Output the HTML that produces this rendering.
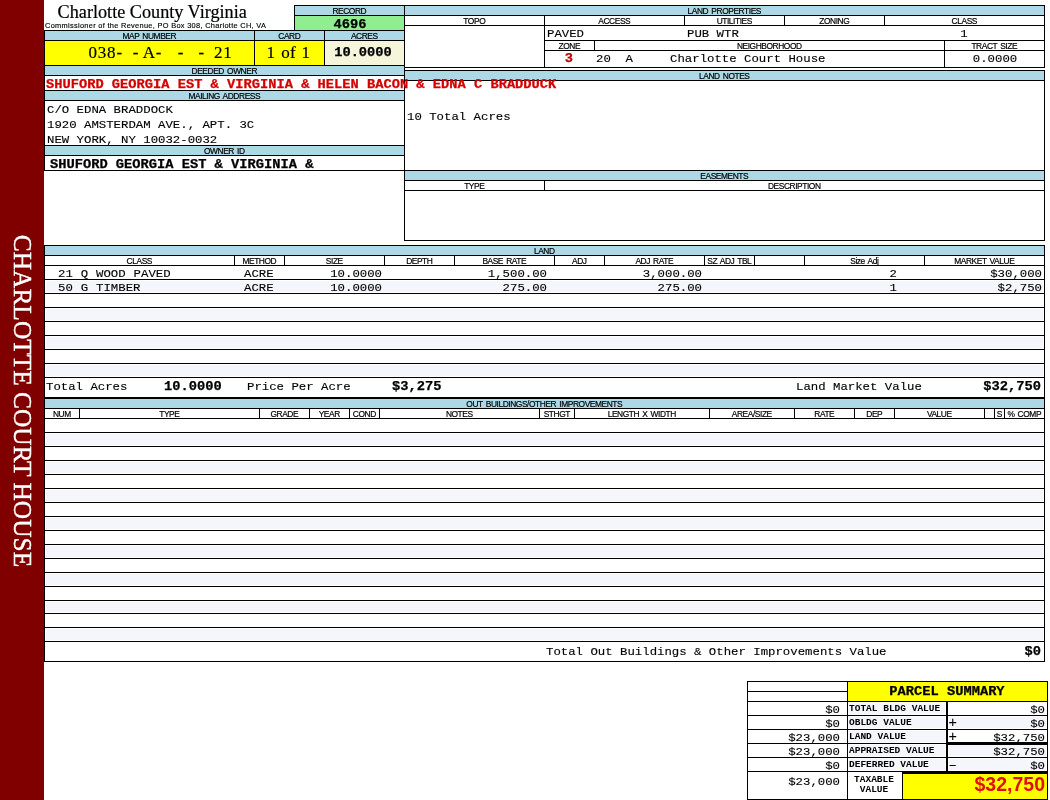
<!DOCTYPE html>
<html lang="en"><head><meta charset="utf-8"><title>Charlotte County Virginia - Property Card</title>
<style>
html,body{margin:0;padding:0;background:#fff}
#pg{position:relative;width:1050px;height:800px;overflow:hidden;background:#fff}
.f,.l,.t{position:absolute}
.l{background:#000}
#tx{position:absolute;left:0;top:0;width:1050px;height:800px;will-change:transform}
.t{white-space:nowrap;color:#000}
.lab,.sub{font-family:"Liberation Sans",Arial,sans-serif}
.lab{word-spacing:1.2px;-webkit-text-stroke:0.2px #000}
.sub{-webkit-text-stroke:0.15px #000}
.serif{font-family:"Liberation Serif","Times New Roman",serif;-webkit-text-stroke:0.2px #000}
.mono,.monob,.pl{font-family:"Liberation Mono","Courier New",monospace}
.monob,.pl{font-weight:bold}
.monob{-webkit-text-stroke:0.25px currentColor}
.mono{-webkit-text-stroke:0.12px #000}
.red{color:#d40000}.red2{color:#c00000}
.big{font-family:"Liberation Sans",Arial,sans-serif;font-weight:bold;color:#e01010}
#sidet{position:absolute;left:23px;top:401px;width:0;height:0}
#sidet span{position:absolute;left:-300px;top:-15px;width:600px;height:30px;line-height:30px;text-align:center;transform:rotate(90deg);color:#fff;font-family:"Liberation Serif","Times New Roman",serif;font-size:25.4px;white-space:nowrap;-webkit-text-stroke:0.35px #fff}
</style></head><body>
<div id="pg">
<div class="f" style="left:0px;top:0px;width:44px;height:800px;background:#800000"></div>
<div class="f" style="left:295px;top:6px;width:109px;height:9px;background:#add8e6"></div>
<div class="f" style="left:295px;top:16px;width:109px;height:14px;background:#90ee90"></div>
<div class="f" style="left:45px;top:31px;width:359px;height:9px;background:#add8e6"></div>
<div class="f" style="left:45px;top:41px;width:279px;height:24px;background:#ffff00"></div>
<div class="f" style="left:325px;top:41px;width:79px;height:24px;background:#f5f5dc"></div>
<div class="f" style="left:45px;top:66px;width:359px;height:9px;background:#add8e6"></div>
<div class="f" style="left:45px;top:91px;width:359px;height:9px;background:#add8e6"></div>
<div class="f" style="left:45px;top:146px;width:359px;height:9px;background:#add8e6"></div>
<div class="f" style="left:405px;top:6px;width:639px;height:9px;background:#add8e6"></div>
<div class="f" style="left:405px;top:71px;width:639px;height:9px;background:#add8e6"></div>
<div class="f" style="left:405px;top:171px;width:639px;height:9px;background:#add8e6"></div>
<div class="f" style="left:45px;top:246px;width:999px;height:9px;background:#add8e6"></div>
<div class="f" style="left:46px;top:281px;width:997px;height:11px;background:#f5f6fb"></div>
<div class="f" style="left:46px;top:309px;width:997px;height:11px;background:#f5f6fb"></div>
<div class="f" style="left:46px;top:337px;width:997px;height:11px;background:#f5f6fb"></div>
<div class="f" style="left:46px;top:365px;width:997px;height:11px;background:#f5f6fb"></div>
<div class="f" style="left:45px;top:399px;width:999px;height:9px;background:#add8e6"></div>
<div class="f" style="left:46px;top:434px;width:997px;height:11px;background:#f5f6fb"></div>
<div class="f" style="left:46px;top:462px;width:997px;height:11px;background:#f5f6fb"></div>
<div class="f" style="left:46px;top:490px;width:997px;height:11px;background:#f5f6fb"></div>
<div class="f" style="left:46px;top:518px;width:997px;height:11px;background:#f5f6fb"></div>
<div class="f" style="left:46px;top:546px;width:997px;height:11px;background:#f5f6fb"></div>
<div class="f" style="left:46px;top:574px;width:997px;height:11px;background:#f5f6fb"></div>
<div class="f" style="left:46px;top:602px;width:997px;height:10px;background:#f5f6fb"></div>
<div class="f" style="left:46px;top:629px;width:997px;height:11px;background:#f5f6fb"></div>
<div class="f" style="left:848px;top:682px;width:199px;height:19px;background:#ffff00"></div>
<div class="f" style="left:849px;top:703px;width:96px;height:11px;background:#f5f6fb"></div>
<div class="f" style="left:849px;top:717px;width:96px;height:11px;background:#f5f6fb"></div>
<div class="f" style="left:849px;top:731px;width:96px;height:11px;background:#f5f6fb"></div>
<div class="f" style="left:849px;top:745px;width:96px;height:11px;background:#f5f6fb"></div>
<div class="f" style="left:849px;top:759px;width:96px;height:11px;background:#f5f6fb"></div>
<div class="f" style="left:949px;top:717px;width:97px;height:11px;background:#f5f6fb"></div>
<div class="f" style="left:949px;top:745px;width:97px;height:11px;background:#f5f6fb"></div>
<div class="f" style="left:949px;top:759px;width:97px;height:11px;background:#f5f6fb"></div>
<div class="f" style="left:903px;top:774px;width:144px;height:25px;background:#ffff00"></div>
<div class="l" style="left:294px;top:5px;width:111px;height:1px"></div>
<div class="l" style="left:294px;top:5px;width:1px;height:26px"></div>
<div class="l" style="left:294px;top:15px;width:111px;height:1px"></div>
<div class="l" style="left:44px;top:30px;width:361px;height:1px"></div>
<div class="l" style="left:44px;top:40px;width:361px;height:1px"></div>
<div class="l" style="left:254px;top:30px;width:1px;height:36px"></div>
<div class="l" style="left:324px;top:30px;width:1px;height:36px"></div>
<div class="l" style="left:44px;top:65px;width:361px;height:1px"></div>
<div class="l" style="left:44px;top:75px;width:361px;height:1px"></div>
<div class="l" style="left:44px;top:90px;width:361px;height:1px"></div>
<div class="l" style="left:44px;top:100px;width:361px;height:1px"></div>
<div class="l" style="left:44px;top:145px;width:361px;height:1px"></div>
<div class="l" style="left:44px;top:155px;width:361px;height:1px"></div>
<div class="l" style="left:44px;top:170px;width:361px;height:1px"></div>
<div class="l" style="left:44px;top:30px;width:1px;height:141px"></div>
<div class="l" style="left:404px;top:5px;width:1px;height:236px"></div>
<div class="l" style="left:404px;top:5px;width:641px;height:1px"></div>
<div class="l" style="left:404px;top:15px;width:641px;height:1px"></div>
<div class="l" style="left:404px;top:25px;width:641px;height:1px"></div>
<div class="l" style="left:684px;top:15px;width:1px;height:11px"></div>
<div class="l" style="left:784px;top:15px;width:1px;height:11px"></div>
<div class="l" style="left:884px;top:15px;width:1px;height:11px"></div>
<div class="l" style="left:544px;top:15px;width:1px;height:53px"></div>
<div class="l" style="left:544px;top:40px;width:501px;height:1px"></div>
<div class="l" style="left:544px;top:50px;width:501px;height:1px"></div>
<div class="l" style="left:594px;top:40px;width:1px;height:11px"></div>
<div class="l" style="left:944px;top:40px;width:1px;height:28px"></div>
<div class="l" style="left:404px;top:67px;width:641px;height:1px"></div>
<div class="l" style="left:1044px;top:5px;width:1px;height:63px"></div>
<div class="l" style="left:404px;top:70px;width:641px;height:1px"></div>
<div class="l" style="left:404px;top:80px;width:641px;height:1px"></div>
<div class="l" style="left:1044px;top:70px;width:1px;height:171px"></div>
<div class="l" style="left:404px;top:170px;width:641px;height:1px"></div>
<div class="l" style="left:404px;top:180px;width:641px;height:1px"></div>
<div class="l" style="left:404px;top:190px;width:641px;height:1px"></div>
<div class="l" style="left:544px;top:180px;width:1px;height:11px"></div>
<div class="l" style="left:404px;top:240px;width:641px;height:1px"></div>
<div class="l" style="left:44px;top:245px;width:1001px;height:1px"></div>
<div class="l" style="left:44px;top:255px;width:1001px;height:1px"></div>
<div class="l" style="left:44px;top:265px;width:1001px;height:1px"></div>
<div class="l" style="left:234px;top:255px;width:1px;height:11px"></div>
<div class="l" style="left:284px;top:255px;width:1px;height:11px"></div>
<div class="l" style="left:384px;top:255px;width:1px;height:11px"></div>
<div class="l" style="left:454px;top:255px;width:1px;height:11px"></div>
<div class="l" style="left:554px;top:255px;width:1px;height:11px"></div>
<div class="l" style="left:604px;top:255px;width:1px;height:11px"></div>
<div class="l" style="left:704px;top:255px;width:1px;height:11px"></div>
<div class="l" style="left:754px;top:255px;width:1px;height:11px"></div>
<div class="l" style="left:804px;top:255px;width:1px;height:11px"></div>
<div class="l" style="left:924px;top:255px;width:1px;height:11px"></div>
<div class="l" style="left:44px;top:279px;width:1001px;height:1px"></div>
<div class="l" style="left:44px;top:293px;width:1001px;height:1px"></div>
<div class="l" style="left:44px;top:307px;width:1001px;height:1px"></div>
<div class="l" style="left:44px;top:321px;width:1001px;height:1px"></div>
<div class="l" style="left:44px;top:335px;width:1001px;height:1px"></div>
<div class="l" style="left:44px;top:349px;width:1001px;height:1px"></div>
<div class="l" style="left:44px;top:363px;width:1001px;height:1px"></div>
<div class="l" style="left:44px;top:377px;width:1001px;height:1px"></div>
<div class="l" style="left:44px;top:397px;width:1001px;height:2px"></div>
<div class="l" style="left:44px;top:245px;width:1px;height:417px"></div>
<div class="l" style="left:1044px;top:245px;width:1px;height:417px"></div>
<div class="l" style="left:44px;top:408px;width:1001px;height:1px"></div>
<div class="l" style="left:44px;top:418px;width:1001px;height:1px"></div>
<div class="l" style="left:79px;top:408px;width:1px;height:11px"></div>
<div class="l" style="left:259px;top:408px;width:1px;height:11px"></div>
<div class="l" style="left:309px;top:408px;width:1px;height:11px"></div>
<div class="l" style="left:349px;top:408px;width:1px;height:11px"></div>
<div class="l" style="left:379px;top:408px;width:1px;height:11px"></div>
<div class="l" style="left:539px;top:408px;width:1px;height:11px"></div>
<div class="l" style="left:574px;top:408px;width:1px;height:11px"></div>
<div class="l" style="left:709px;top:408px;width:1px;height:11px"></div>
<div class="l" style="left:794px;top:408px;width:1px;height:11px"></div>
<div class="l" style="left:854px;top:408px;width:1px;height:11px"></div>
<div class="l" style="left:894px;top:408px;width:1px;height:11px"></div>
<div class="l" style="left:984px;top:408px;width:1px;height:11px"></div>
<div class="l" style="left:994px;top:408px;width:1px;height:11px"></div>
<div class="l" style="left:1004px;top:408px;width:1px;height:11px"></div>
<div class="l" style="left:44px;top:432px;width:1001px;height:1px"></div>
<div class="l" style="left:44px;top:446px;width:1001px;height:1px"></div>
<div class="l" style="left:44px;top:460px;width:1001px;height:1px"></div>
<div class="l" style="left:44px;top:474px;width:1001px;height:1px"></div>
<div class="l" style="left:44px;top:488px;width:1001px;height:1px"></div>
<div class="l" style="left:44px;top:502px;width:1001px;height:1px"></div>
<div class="l" style="left:44px;top:516px;width:1001px;height:1px"></div>
<div class="l" style="left:44px;top:530px;width:1001px;height:1px"></div>
<div class="l" style="left:44px;top:544px;width:1001px;height:1px"></div>
<div class="l" style="left:44px;top:558px;width:1001px;height:1px"></div>
<div class="l" style="left:44px;top:572px;width:1001px;height:1px"></div>
<div class="l" style="left:44px;top:586px;width:1001px;height:1px"></div>
<div class="l" style="left:44px;top:600px;width:1001px;height:1px"></div>
<div class="l" style="left:44px;top:613px;width:1001px;height:1px"></div>
<div class="l" style="left:44px;top:627px;width:1001px;height:1px"></div>
<div class="l" style="left:44px;top:641px;width:1001px;height:1px"></div>
<div class="l" style="left:44px;top:661px;width:1001px;height:1px"></div>
<div class="l" style="left:747px;top:681px;width:301px;height:1px"></div>
<div class="l" style="left:747px;top:691px;width:101px;height:1px"></div>
<div class="l" style="left:747px;top:701px;width:301px;height:1px"></div>
<div class="l" style="left:747px;top:681px;width:1px;height:119px"></div>
<div class="l" style="left:847px;top:681px;width:1px;height:119px"></div>
<div class="l" style="left:1047px;top:681px;width:1px;height:119px"></div>
<div class="l" style="left:747px;top:715px;width:301px;height:1px"></div>
<div class="l" style="left:747px;top:729px;width:301px;height:1px"></div>
<div class="l" style="left:747px;top:743px;width:301px;height:1px"></div>
<div class="l" style="left:747px;top:757px;width:301px;height:1px"></div>
<div class="l" style="left:747px;top:771px;width:301px;height:1px"></div>
<div class="l" style="left:747px;top:799px;width:301px;height:1px"></div>
<div class="l" style="left:946px;top:701px;width:2px;height:71px"></div>
<div class="l" style="left:948px;top:742px;width:100px;height:3px"></div>
<div class="l" style="left:903px;top:771px;width:145px;height:3px"></div>
<div class="l" style="left:902px;top:772px;width:1px;height:28px"></div>
<div id="tx">
<div class="t serif" style="left:-147.80px;top:1px;width:600px;line-height:23px;font-size:18.2px;text-align:center;">Charlotte County Virginia</div>
<div class="t sub" style="left:45.00px;top:21px;width:600px;line-height:9px;font-size:7.4px;text-align:left;letter-spacing:0.31px;">Commissioner of the Revenue, PO Box 308, Charlotte CH, VA</div>
<div class="t lab" style="left:49.29px;top:6px;width:600px;line-height:10px;font-size:8.4px;text-align:center;letter-spacing:-0.42px;">RECORD</div>
<div class="t monob" style="left:49.50px;top:18px;width:600px;line-height:15px;font-size:12.0px;text-align:center;transform:scaleX(1.1429);transform-origin:50% 0;">4696</div>
<div class="t lab" style="left:-150.71px;top:31px;width:600px;line-height:10px;font-size:8.4px;text-align:center;letter-spacing:-0.42px;">MAP NUMBER</div>
<div class="t lab" style="left:-10.71px;top:31px;width:600px;line-height:10px;font-size:8.4px;text-align:center;letter-spacing:-0.42px;">CARD</div>
<div class="t lab" style="left:64.29px;top:31px;width:600px;line-height:10px;font-size:8.4px;text-align:center;letter-spacing:-0.42px;">ACRES</div>
<div class="t serif" style="left:88.50px;top:42px;width:160px;line-height:21px;font-size:17px;text-align:left;letter-spacing:0.8px;height:21px;"><span style="position:absolute;left:0.0px;top:0">038-</span> <span style="position:absolute;left:44.3px;top:0">-</span> <span style="position:absolute;left:54.3px;top:0">A-</span> <span style="position:absolute;left:89.3px;top:0">-</span> <span style="position:absolute;left:110.0px;top:0">-</span> <span style="position:absolute;left:125.5px;top:0">21</span></div>
<div class="t serif" style="left:-11.50px;top:42px;width:600px;line-height:21px;font-size:17px;text-align:center;word-spacing:1.3px;letter-spacing:0.25px;">1 of 1</div>
<div class="t monob" style="left:63.00px;top:46px;width:600px;line-height:15px;font-size:12.0px;text-align:center;transform:scaleX(1.1429);transform-origin:50% 0;">10.0000</div>
<div class="t lab" style="left:-75.71px;top:66px;width:600px;line-height:10px;font-size:8.4px;text-align:center;letter-spacing:-0.42px;">DEEDED OWNER</div>
<div class="t monob red" style="left:46.00px;top:78px;width:700px;line-height:15px;font-size:12.0px;text-align:left;transform:scaleX(1.1429);transform-origin:0 0;">SHUFORD GEORGIA EST &amp; VIRGINIA &amp; HELEN BACON &amp; EDNA C BRADDUCK</div>
<div class="t lab" style="left:-75.71px;top:91px;width:600px;line-height:10px;font-size:8.4px;text-align:center;letter-spacing:-0.42px;">MAILING ADDRESS</div>
<div class="t mono" style="left:47.00px;top:103px;width:600px;line-height:15px;font-size:11.7px;text-align:left;transform:scaleX(1.0554);transform-origin:0 0;">C/O EDNA BRADDOCK</div>
<div class="t mono" style="left:47.00px;top:118px;width:600px;line-height:15px;font-size:11.7px;text-align:left;transform:scaleX(1.0554);transform-origin:0 0;">1920 AMSTERDAM AVE., APT. 3C</div>
<div class="t mono" style="left:47.00px;top:133px;width:600px;line-height:15px;font-size:11.7px;text-align:left;transform:scaleX(1.0554);transform-origin:0 0;">NEW YORK, NY 10032-0032</div>
<div class="t lab" style="left:-75.71px;top:146px;width:600px;line-height:10px;font-size:8.4px;text-align:center;letter-spacing:-0.42px;">OWNER ID</div>
<div class="t monob" style="left:50.00px;top:158px;width:600px;line-height:15px;font-size:12.0px;text-align:left;transform:scaleX(1.1429);transform-origin:0 0;">SHUFORD GEORGIA EST &amp; VIRGINIA &amp;</div>
<div class="t lab" style="left:424.29px;top:6px;width:600px;line-height:10px;font-size:8.4px;text-align:center;letter-spacing:-0.42px;">LAND PROPERTIES</div>
<div class="t lab" style="left:174.29px;top:16px;width:600px;line-height:10px;font-size:8.4px;text-align:center;letter-spacing:-0.42px;">TOPO</div>
<div class="t lab" style="left:314.29px;top:16px;width:600px;line-height:10px;font-size:8.4px;text-align:center;letter-spacing:-0.42px;">ACCESS</div>
<div class="t lab" style="left:434.29px;top:16px;width:600px;line-height:10px;font-size:8.4px;text-align:center;letter-spacing:-0.42px;">UTILITIES</div>
<div class="t lab" style="left:534.29px;top:16px;width:600px;line-height:10px;font-size:8.4px;text-align:center;letter-spacing:-0.42px;">ZONING</div>
<div class="t lab" style="left:664.29px;top:16px;width:600px;line-height:10px;font-size:8.4px;text-align:center;letter-spacing:-0.42px;">CLASS</div>
<div class="t mono" style="left:547.00px;top:27px;width:600px;line-height:15px;font-size:11.7px;text-align:left;transform:scaleX(1.0554);transform-origin:0 0;">PAVED</div>
<div class="t mono" style="left:687.00px;top:27px;width:600px;line-height:15px;font-size:11.7px;text-align:left;transform:scaleX(1.0554);transform-origin:0 0;">PUB WTR</div>
<div class="t mono" style="left:664.00px;top:27px;width:600px;line-height:15px;font-size:11.7px;text-align:center;transform:scaleX(1.0554);transform-origin:50% 0;">1</div>
<div class="t lab" style="left:269.29px;top:41px;width:600px;line-height:10px;font-size:8.4px;text-align:center;letter-spacing:-0.42px;">ZONE</div>
<div class="t lab" style="left:469.29px;top:41px;width:600px;line-height:10px;font-size:8.4px;text-align:center;letter-spacing:-0.42px;">NEIGHBORHOOD</div>
<div class="t lab" style="left:694.29px;top:41px;width:600px;line-height:10px;font-size:8.4px;text-align:center;letter-spacing:-0.42px;">TRACT SIZE</div>
<div class="t monob red2" style="left:269.00px;top:52px;width:600px;line-height:15px;font-size:12.0px;text-align:center;transform:scaleX(1.1429);transform-origin:50% 0;">3</div>
<div class="t mono" style="left:596.00px;top:52px;width:600px;line-height:15px;font-size:11.7px;text-align:left;white-space:pre;transform:scaleX(1.0554);transform-origin:0 0;">20  A     Charlotte Court House</div>
<div class="t mono" style="left:694.50px;top:52px;width:600px;line-height:15px;font-size:11.7px;text-align:center;transform:scaleX(1.0554);transform-origin:50% 0;">0.0000</div>
<div class="t lab" style="left:424.29px;top:71px;width:600px;line-height:10px;font-size:8.4px;text-align:center;letter-spacing:-0.42px;">LAND NOTES</div>
<div class="t mono" style="left:406.50px;top:110px;width:600px;line-height:15px;font-size:11.7px;text-align:left;transform:scaleX(1.0554);transform-origin:0 0;">10 Total Acres</div>
<div class="t lab" style="left:424.29px;top:171px;width:600px;line-height:10px;font-size:8.4px;text-align:center;letter-spacing:-0.42px;">EASEMENTS</div>
<div class="t lab" style="left:174.29px;top:181px;width:600px;line-height:10px;font-size:8.4px;text-align:center;letter-spacing:-0.42px;">TYPE</div>
<div class="t lab" style="left:494.29px;top:181px;width:600px;line-height:10px;font-size:8.4px;text-align:center;letter-spacing:-0.42px;">DESCRIPTION</div>
<div class="t lab" style="left:244.29px;top:246px;width:600px;line-height:10px;font-size:8.4px;text-align:center;letter-spacing:-0.42px;">LAND</div>
<div class="t lab" style="left:-160.71px;top:256px;width:600px;line-height:10px;font-size:8.4px;text-align:center;letter-spacing:-0.42px;">CLASS</div>
<div class="t lab" style="left:-40.71px;top:256px;width:600px;line-height:10px;font-size:8.4px;text-align:center;letter-spacing:-0.42px;">METHOD</div>
<div class="t lab" style="left:34.29px;top:256px;width:600px;line-height:10px;font-size:8.4px;text-align:center;letter-spacing:-0.42px;">SIZE</div>
<div class="t lab" style="left:119.29px;top:256px;width:600px;line-height:10px;font-size:8.4px;text-align:center;letter-spacing:-0.42px;">DEPTH</div>
<div class="t lab" style="left:204.29px;top:256px;width:600px;line-height:10px;font-size:8.4px;text-align:center;letter-spacing:-0.42px;">BASE RATE</div>
<div class="t lab" style="left:279.29px;top:256px;width:600px;line-height:10px;font-size:8.4px;text-align:center;letter-spacing:-0.42px;">ADJ</div>
<div class="t lab" style="left:354.29px;top:256px;width:600px;line-height:10px;font-size:8.4px;text-align:center;letter-spacing:-0.42px;">ADJ RATE</div>
<div class="t lab" style="left:429.29px;top:256px;width:600px;line-height:10px;font-size:8.4px;text-align:center;letter-spacing:-0.42px;">SZ ADJ TBL</div>
<div class="t lab" style="left:564.29px;top:256px;width:600px;line-height:10px;font-size:8.4px;text-align:center;letter-spacing:-0.42px;">Size Adj</div>
<div class="t lab" style="left:684.29px;top:256px;width:600px;line-height:10px;font-size:8.4px;text-align:center;letter-spacing:-0.42px;">MARKET VALUE</div>
<div class="t mono" style="left:57.50px;top:267px;width:600px;line-height:15px;font-size:11.7px;text-align:left;white-space:pre;word-spacing:0.5px;transform:scaleX(1.0554);transform-origin:0 0;">21 Q WOOD PAVED</div>
<div class="t mono" style="left:244.00px;top:267px;width:600px;line-height:15px;font-size:11.7px;text-align:left;transform:scaleX(1.0554);transform-origin:0 0;">ACRE</div>
<div class="t mono" style="left:-218.00px;top:267px;width:600px;line-height:15px;font-size:11.7px;text-align:right;transform:scaleX(1.0554);transform-origin:100% 0;">10.0000</div>
<div class="t mono" style="left:-53.50px;top:267px;width:600px;line-height:15px;font-size:11.7px;text-align:right;transform:scaleX(1.0554);transform-origin:100% 0;">1,500.00</div>
<div class="t mono" style="left:101.50px;top:267px;width:600px;line-height:15px;font-size:11.7px;text-align:right;transform:scaleX(1.0554);transform-origin:100% 0;">3,000.00</div>
<div class="t mono" style="left:297.00px;top:267px;width:600px;line-height:15px;font-size:11.7px;text-align:right;transform:scaleX(1.0554);transform-origin:100% 0;">2</div>
<div class="t mono" style="left:441.50px;top:267px;width:600px;line-height:15px;font-size:11.7px;text-align:right;transform:scaleX(1.0554);transform-origin:100% 0;">$30,000</div>
<div class="t mono" style="left:57.50px;top:281px;width:600px;line-height:15px;font-size:11.7px;text-align:left;white-space:pre;word-spacing:0.5px;transform:scaleX(1.0554);transform-origin:0 0;">50 G TIMBER</div>
<div class="t mono" style="left:244.00px;top:281px;width:600px;line-height:15px;font-size:11.7px;text-align:left;transform:scaleX(1.0554);transform-origin:0 0;">ACRE</div>
<div class="t mono" style="left:-218.00px;top:281px;width:600px;line-height:15px;font-size:11.7px;text-align:right;transform:scaleX(1.0554);transform-origin:100% 0;">10.0000</div>
<div class="t mono" style="left:-53.50px;top:281px;width:600px;line-height:15px;font-size:11.7px;text-align:right;transform:scaleX(1.0554);transform-origin:100% 0;">275.00</div>
<div class="t mono" style="left:101.50px;top:281px;width:600px;line-height:15px;font-size:11.7px;text-align:right;transform:scaleX(1.0554);transform-origin:100% 0;">275.00</div>
<div class="t mono" style="left:297.00px;top:281px;width:600px;line-height:15px;font-size:11.7px;text-align:right;transform:scaleX(1.0554);transform-origin:100% 0;">1</div>
<div class="t mono" style="left:441.50px;top:281px;width:600px;line-height:15px;font-size:11.7px;text-align:right;transform:scaleX(1.0554);transform-origin:100% 0;">$2,750</div>
<div class="t mono" style="left:46.00px;top:380px;width:600px;line-height:15px;font-size:11.7px;text-align:left;transform:scaleX(1.0554);transform-origin:0 0;">Total Acres</div>
<div class="t monob" style="left:164.00px;top:380px;width:600px;line-height:15px;font-size:12.0px;text-align:left;transform:scaleX(1.1429);transform-origin:0 0;">10.0000</div>
<div class="t mono" style="left:246.50px;top:380px;width:600px;line-height:15px;font-size:11.7px;text-align:left;transform:scaleX(1.0554);transform-origin:0 0;">Price Per Acre</div>
<div class="t monob" style="left:392.00px;top:380px;width:600px;line-height:15px;font-size:12.0px;text-align:left;transform:scaleX(1.1429);transform-origin:0 0;">$3,275</div>
<div class="t mono" style="left:796.00px;top:380px;width:600px;line-height:15px;font-size:11.7px;text-align:left;transform:scaleX(1.0554);transform-origin:0 0;">Land Market Value</div>
<div class="t monob" style="left:441.00px;top:380px;width:600px;line-height:15px;font-size:12.0px;text-align:right;transform:scaleX(1.1429);transform-origin:100% 0;">$32,750</div>
<div class="t lab" style="left:244.29px;top:399px;width:600px;line-height:10px;font-size:8.4px;text-align:center;letter-spacing:-0.42px;">OUT BUILDINGS/OTHER IMPROVEMENTS</div>
<div class="t lab" style="left:-238.21px;top:409px;width:600px;line-height:10px;font-size:8.4px;text-align:center;letter-spacing:-0.42px;">NUM</div>
<div class="t lab" style="left:-130.71px;top:409px;width:600px;line-height:10px;font-size:8.4px;text-align:center;letter-spacing:-0.42px;">TYPE</div>
<div class="t lab" style="left:-15.71px;top:409px;width:600px;line-height:10px;font-size:8.4px;text-align:center;letter-spacing:-0.42px;">GRADE</div>
<div class="t lab" style="left:29.29px;top:409px;width:600px;line-height:10px;font-size:8.4px;text-align:center;letter-spacing:-0.42px;">YEAR</div>
<div class="t lab" style="left:64.29px;top:409px;width:600px;line-height:10px;font-size:8.4px;text-align:center;letter-spacing:-0.42px;">COND</div>
<div class="t lab" style="left:159.29px;top:409px;width:600px;line-height:10px;font-size:8.4px;text-align:center;letter-spacing:-0.42px;">NOTES</div>
<div class="t lab" style="left:256.79px;top:409px;width:600px;line-height:10px;font-size:8.4px;text-align:center;letter-spacing:-0.42px;">STHGT</div>
<div class="t lab" style="left:341.79px;top:409px;width:600px;line-height:10px;font-size:8.4px;text-align:center;letter-spacing:-0.42px;">LENGTH X WIDTH</div>
<div class="t lab" style="left:451.79px;top:409px;width:600px;line-height:10px;font-size:8.4px;text-align:center;letter-spacing:-0.42px;">AREA/SIZE</div>
<div class="t lab" style="left:524.29px;top:409px;width:600px;line-height:10px;font-size:8.4px;text-align:center;letter-spacing:-0.42px;">RATE</div>
<div class="t lab" style="left:574.29px;top:409px;width:600px;line-height:10px;font-size:8.4px;text-align:center;letter-spacing:-0.42px;">DEP</div>
<div class="t lab" style="left:639.29px;top:409px;width:600px;line-height:10px;font-size:8.4px;text-align:center;letter-spacing:-0.42px;">VALUE</div>
<div class="t lab" style="left:699.29px;top:409px;width:600px;line-height:10px;font-size:8.4px;text-align:center;letter-spacing:-0.42px;">S</div>
<div class="t lab" style="left:724.29px;top:409px;width:600px;line-height:10px;font-size:8.4px;text-align:center;letter-spacing:-0.42px;">% COMP</div>
<div class="t mono" style="left:546.00px;top:645px;width:600px;line-height:15px;font-size:11.7px;text-align:left;transform:scaleX(1.0554);transform-origin:0 0;">Total Out Buildings &amp; Other Improvements Value</div>
<div class="t monob" style="left:440.50px;top:645px;width:600px;line-height:15px;font-size:12.0px;text-align:right;transform:scaleX(1.1429);transform-origin:100% 0;">$0</div>
<div class="t monob" style="left:647.00px;top:685px;width:600px;line-height:15px;font-size:12.0px;text-align:center;white-space:pre;transform:scaleX(1.1429);transform-origin:50% 0;">PARCEL SUMMARY</div>
<div class="t mono" style="left:239.50px;top:703px;width:600px;line-height:15px;font-size:11.7px;text-align:right;transform:scaleX(1.0554);transform-origin:100% 0;">$0</div>
<div class="t pl" style="left:849.00px;top:704px;width:600px;line-height:11px;font-size:8.8px;text-align:left;transform:scaleX(1.0794);transform-origin:0 0;">TOTAL BLDG VALUE</div>
<div class="t mono" style="left:444.50px;top:703px;width:600px;line-height:15px;font-size:11.7px;text-align:right;transform:scaleX(1.0554);transform-origin:100% 0;">$0</div>
<div class="t mono" style="left:239.50px;top:717px;width:600px;line-height:15px;font-size:11.7px;text-align:right;transform:scaleX(1.0554);transform-origin:100% 0;">$0</div>
<div class="t pl" style="left:849.00px;top:718px;width:600px;line-height:11px;font-size:8.8px;text-align:left;transform:scaleX(1.0794);transform-origin:0 0;">OBLDG VALUE</div>
<div class="t mono" style="left:444.50px;top:717px;width:600px;line-height:15px;font-size:11.7px;text-align:right;transform:scaleX(1.0554);transform-origin:100% 0;">$0</div>
<div class="t mono" style="left:948.50px;top:714px;width:600px;line-height:18px;font-size:14px;text-align:left;">+</div>
<div class="t mono" style="left:239.50px;top:731px;width:600px;line-height:15px;font-size:11.7px;text-align:right;transform:scaleX(1.0554);transform-origin:100% 0;">$23,000</div>
<div class="t pl" style="left:849.00px;top:732px;width:600px;line-height:11px;font-size:8.8px;text-align:left;transform:scaleX(1.0794);transform-origin:0 0;">LAND VALUE</div>
<div class="t mono" style="left:444.50px;top:731px;width:600px;line-height:15px;font-size:11.7px;text-align:right;transform:scaleX(1.0554);transform-origin:100% 0;">$32,750</div>
<div class="t mono" style="left:948.50px;top:728px;width:600px;line-height:18px;font-size:14px;text-align:left;">+</div>
<div class="t mono" style="left:239.50px;top:745px;width:600px;line-height:15px;font-size:11.7px;text-align:right;transform:scaleX(1.0554);transform-origin:100% 0;">$23,000</div>
<div class="t pl" style="left:849.00px;top:746px;width:600px;line-height:11px;font-size:8.8px;text-align:left;transform:scaleX(1.0794);transform-origin:0 0;">APPRAISED VALUE</div>
<div class="t mono" style="left:444.50px;top:745px;width:600px;line-height:15px;font-size:11.7px;text-align:right;transform:scaleX(1.0554);transform-origin:100% 0;">$32,750</div>
<div class="t mono" style="left:239.50px;top:759px;width:600px;line-height:15px;font-size:11.7px;text-align:right;transform:scaleX(1.0554);transform-origin:100% 0;">$0</div>
<div class="t pl" style="left:849.00px;top:760px;width:600px;line-height:11px;font-size:8.8px;text-align:left;transform:scaleX(1.0794);transform-origin:0 0;">DEFERRED VALUE</div>
<div class="t mono" style="left:444.50px;top:759px;width:600px;line-height:15px;font-size:11.7px;text-align:right;transform:scaleX(1.0554);transform-origin:100% 0;">$0</div>
<div class="t mono" style="left:948.50px;top:756px;width:600px;line-height:18px;font-size:14px;text-align:left;">–</div>
<div class="t mono" style="left:239.50px;top:775px;width:600px;line-height:15px;font-size:11.7px;text-align:right;transform:scaleX(1.0554);transform-origin:100% 0;">$23,000</div>
<div class="t pl" style="left:573.50px;top:775px;width:600px;line-height:11px;font-size:8.8px;text-align:center;transform:scaleX(1.0794);transform-origin:50% 0;">TAXABLE</div>
<div class="t pl" style="left:573.50px;top:785px;width:600px;line-height:11px;font-size:8.8px;text-align:center;transform:scaleX(1.0794);transform-origin:50% 0;">VALUE</div>
<div class="t big" style="left:445.00px;top:772px;width:600px;line-height:24px;font-size:19.5px;text-align:right;">$32,750</div>
</div>
<div id="sidet"><span>CHARLOTTE COURT HOUSE</span></div>
</div></body></html>
